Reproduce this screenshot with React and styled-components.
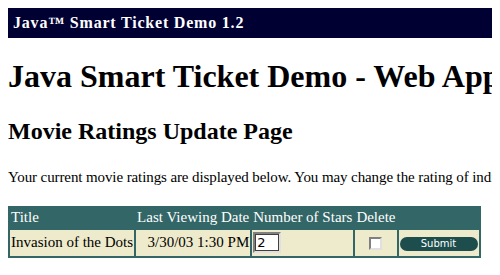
import styled, { createGlobalStyle } from "styled-components";

const Global = createGlobalStyle`
  body {
    margin: 8px;
    font-family: "Liberation Serif", "Times New Roman", serif;
    background: #ffffff;
    color: #000000;
    overflow: hidden;
  }
`;

const TopBar = styled.div`
  background: #000033;
  color: #ffffff;
  height: 30px;
  display: flex;
  align-items: center;
  padding-left: 5px;
  font-weight: bold;
  font-size: 16px;
  letter-spacing: 0.8px;
  width: 800px;
`;

const PageTitle = styled.h1`
  font-size: 32px;
  margin: 20px 0 0;
  white-space: nowrap;
`;

const SubTitle = styled.h2`
  font-size: 24px;
  margin: 23px 0 0;
`;

const Intro = styled.p`
  font-size: 15px;
  letter-spacing: -0.1px;
  margin: 24px 0 0;
  white-space: nowrap;
`;

const Ratings = styled.table`
  margin-top: 20px;
  background: #336666;
  border-spacing: 2px;
  font-size: 15px;
`;

const HeadCell = styled.th`
  color: #ffffff;
  font-weight: normal;
  text-align: left;
  padding: 1px 1px 2px;
`;

const Cell = styled.td`
  background: #eeeacc;
  padding: 2px 1px 3px;
  text-align: ${(p) => p.$align || "left"};
`;

const StarsInput = styled.input`
  box-sizing: border-box;
  width: 28px;
  height: 21px;
  font-family: "DejaVu Sans", sans-serif;
  font-size: 13px;
  padding: 0 2px;
  border: 2px solid;
  border-color: #808080 #e0e0e0 #e0e0e0 #808080;
  outline: 1px solid #404040;
  outline-offset: -3px;
  background: #fff;
  vertical-align: middle;
`;

const Check = styled.span`
  display: inline-block;
  box-sizing: border-box;
  width: 13px;
  height: 13px;
  border: 2px solid;
  border-color: #808080 #e0e0e0 #e0e0e0 #808080;
  background: #fff;
  vertical-align: middle;
`;

const SubmitButton = styled.button`
  width: 78px;
  height: 14px;
  border: none;
  border-radius: 7px;
  padding: 0;
  color: #ffffff;
  font-family: "DejaVu Sans", sans-serif;
  font-size: 10px;
  line-height: 14px;
  background-color: #1e4d4d;
  background-image: radial-gradient(#5d8f8f 35%, transparent 40%);
  background-size: 2px 2px;
  vertical-align: middle;
`;

export default function App() {
  return (
    <>
      <Global />
      <TopBar>Java™ Smart Ticket Demo 1.2</TopBar>
      <PageTitle>Java Smart Ticket Demo - Web Application</PageTitle>
      <SubTitle>Movie Ratings Update Page</SubTitle>
      <Intro>
        Your current movie ratings are displayed below. You may change the
        rating of individual movies.
      </Intro>
      <Ratings>
        <thead>
          <tr>
            <HeadCell>Title</HeadCell>
            <HeadCell>Last Viewing Date</HeadCell>
            <HeadCell>Number of Stars</HeadCell>
            <HeadCell>Delete</HeadCell>
            <HeadCell />
          </tr>
        </thead>
        <tbody>
          <tr>
            <Cell>Invasion of the Dots</Cell>
            <Cell $align="right">3/30/03 1:30 PM</Cell>
            <Cell>
              <StarsInput defaultValue="2" />
            </Cell>
            <Cell $align="center">
              <Check />
            </Cell>
            <Cell>
              <SubmitButton>Submit</SubmitButton>
            </Cell>
          </tr>
        </tbody>
      </Ratings>
    </>
  );
}
